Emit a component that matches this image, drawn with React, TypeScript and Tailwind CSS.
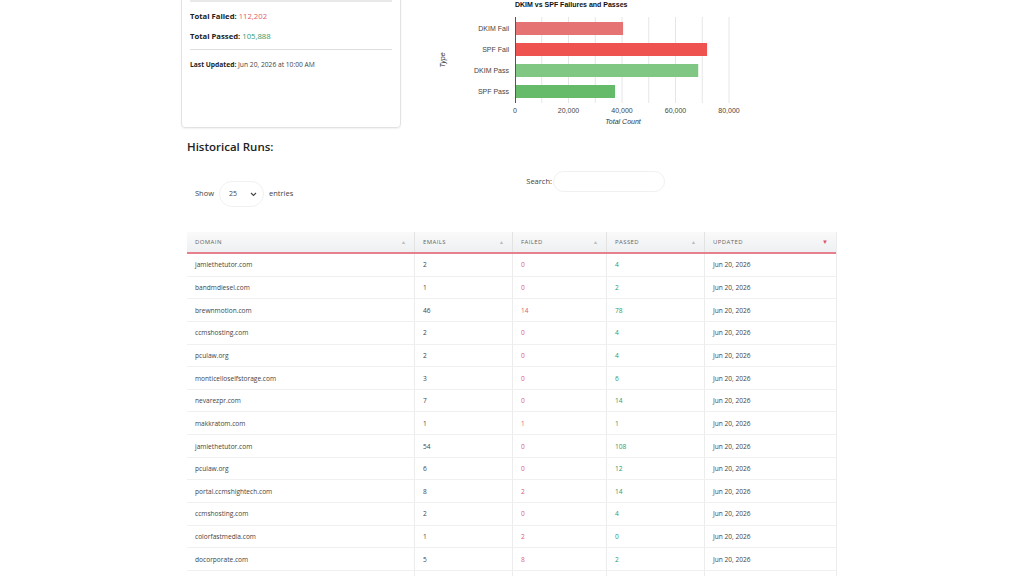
import React from "react";

type Run = { domain: string; emails: number; failed: number; passed: number; updated: string };

const runs: Run[] = [
  { domain: "jamiethetutor.com", emails: 2, failed: 0, passed: 4, updated: "Jun 20, 2026" },
  { domain: "bandmdiesel.com", emails: 1, failed: 0, passed: 2, updated: "Jun 20, 2026" },
  { domain: "brewnmotion.com", emails: 46, failed: 14, passed: 78, updated: "Jun 20, 2026" },
  { domain: "ccmshosting.com", emails: 2, failed: 0, passed: 4, updated: "Jun 20, 2026" },
  { domain: "pculaw.org", emails: 2, failed: 0, passed: 4, updated: "Jun 20, 2026" },
  { domain: "monticelloselfstorage.com", emails: 3, failed: 0, passed: 6, updated: "Jun 20, 2026" },
  { domain: "nevarezpr.com", emails: 7, failed: 0, passed: 14, updated: "Jun 20, 2026" },
  { domain: "makkratom.com", emails: 1, failed: 1, passed: 1, updated: "Jun 20, 2026" },
  { domain: "jamiethetutor.com", emails: 54, failed: 0, passed: 108, updated: "Jun 20, 2026" },
  { domain: "pculaw.org", emails: 6, failed: 0, passed: 12, updated: "Jun 20, 2026" },
  { domain: "portal.ccmshightech.com", emails: 8, failed: 2, passed: 14, updated: "Jun 20, 2026" },
  { domain: "ccmshosting.com", emails: 2, failed: 0, passed: 4, updated: "Jun 20, 2026" },
  { domain: "colorfastmedia.com", emails: 1, failed: 2, passed: 0, updated: "Jun 20, 2026" },
  { domain: "docorporate.com", emails: 5, failed: 8, passed: 2, updated: "Jun 20, 2026" },
];

const bars = [
  { label: "DKIM Fail", value: 40400, color: "#e57373" },
  { label: "SPF Fail", value: 71802, color: "#ef5350" },
  { label: "DKIM Pass", value: 68488, color: "#81c784" },
  { label: "SPF Pass", value: 37400, color: "#66bb6a" },
];

function Chart() {
  const x0 = 105;
  const scale = 214 / 80000;
  const grid = [10000, 20000, 30000, 40000, 50000, 60000, 70000, 80000];
  const ticks = [0, 20000, 40000, 60000, 80000];
  return (
    <svg width={350} height={130} className="block" style={{ fontFamily: "'Liberation Sans', Arial, sans-serif" }}>
      <text x={x0} y={7} fontSize={7} fontWeight="bold" fill="#111">
        DKIM vs SPF Failures and Passes
      </text>
      {grid.map((g) => (
        <line key={g} x1={x0 + g * scale} x2={x0 + g * scale} y1={17} y2={103} stroke="#e6e6e6" strokeWidth={1} />
      ))}
      {bars.map((b, i) => {
        const cy = 28.5 + i * 21;
        return (
          <g key={b.label}>
            <rect x={x0} y={cy - 6.5} width={b.value * scale} height={13} fill={b.color} />
            <text x={99} y={cy + 2.5} fontSize={7} textAnchor="end" fill="#444">
              {b.label}
            </text>
          </g>
        );
      })}
      <line x1={x0 + 0.5} x2={x0 + 0.5} y1={17} y2={103} stroke="#555" strokeWidth={1} />
      {ticks.map((t) => (
        <text key={t} x={x0 + t * scale} y={112.5} fontSize={7} textAnchor="middle" fill="#444">
          {t.toLocaleString("en-US")}
        </text>
      ))}
      <text x={213} y={123.5} fontSize={7} fontStyle="italic" textAnchor="middle" fill="#333">
        Total Count
      </text>
      <text x={0} y={0} fontSize={7} fontStyle="italic" textAnchor="middle" fill="#333" transform="translate(34.5 60) rotate(-90)">
        Type
      </text>
    </svg>
  );
}

function SortMark({ active }: { active?: boolean }) {
  return active ? (
    <span className="text-[6px] leading-none text-[#e0506a]">▼</span>
  ) : (
    <span className="text-[5px] leading-none text-[#bbb]">▲</span>
  );
}

const cols = [
  { key: "DOMAIN", w: "w-[227px]" },
  { key: "EMAILS", w: "w-[98px]" },
  { key: "FAILED", w: "w-[94px]" },
  { key: "PASSED", w: "w-[98px]" },
  { key: "UPDATED", w: "flex-1" },
];

export default function App() {
  return (
    <div
      className="min-h-[576px] bg-white text-[#333]"
      style={{ fontFamily: "'Open Sans', 'Noto Sans', sans-serif" }}
    >
      <div className="mx-auto w-[662px]">
        {/* summary card + chart */}
        <div className="flex items-start">
          <div className="-mt-[12px] w-[220px] h-[140px] rounded-[4px] border border-[#e2e2e2] shadow-[0_1px_2px_rgba(0,0,0,0.06)] px-[8px] pt-[11px]">
            <div className="h-[2px] bg-[#e9e9e9]" />
            <div className="mt-[8px] text-[7.7px] leading-[12px]">
              <span className="font-bold text-[#222]">Total Failed: </span>
              <span className="text-[#df5a6c]">112,202</span>
            </div>
            <div className="mt-[8px] text-[7.7px] leading-[12px]">
              <span className="font-bold text-[#222]">Total Passed: </span>
              <span className="text-[#2e9a6d]">105,888</span>
            </div>
            <div className="mt-[7px] h-px bg-[#dddddd]" />
            <div className="mt-[10px] text-[6.7px] leading-[10px]">
              <span className="font-bold text-[#222]">Last Updated: </span>
              <span className="text-[#444]">Jun 20, 2026 at 10:00 AM</span>
            </div>
          </div>
          <div className="ml-[9px]">
            <Chart />
          </div>
        </div>

        <div className="px-[6px]">
          <h2 className="mt-[9px] text-[11.5px] leading-[16px] font-semibold text-[#222]">Historical Runs:</h2>

          <div className="mt-[12px] flex items-start">
            <div className="mt-[14px] ml-[8px] flex items-center gap-[5px] text-[7.5px] text-[#444]">
              <span>Show</span>
              <div className="flex h-[26px] w-[45px] items-center justify-between rounded-full border border-[#f1f1f1] pl-[9px] pr-[6px]">
                <span className="text-[7px]">25</span>
                <svg width="7" height="5" viewBox="0 0 7 5">
                  <path d="M1 1 L3.5 3.5 L6 1" fill="none" stroke="#444" strokeWidth="1.1" />
                </svg>
              </div>
              <span>entries</span>
            </div>
            <div className="ml-[233px] mt-[4px] flex items-center text-[7.5px] text-[#444]">
              <span>Search:</span>
              <div className="ml-px h-[21px] w-[112px] rounded-full border border-[#f0f0f0]" />
            </div>
          </div>

          {/* runs table */}
          <div className="mt-[25px] border-r border-[#ececec] text-[6.6px]">
            <div className="flex h-[22px] border-b-2 border-[#e6808f] bg-gradient-to-b from-[#fafafa] to-[#eef0f1]">
              {cols.map((c, i) => (
                <div
                  key={c.key}
                  className={`${c.w} flex items-center justify-between px-[8px] ${i > 0 ? "border-l border-[#e3e3e3]" : ""}`}
                >
                  <span className="text-[6px] tracking-[0.4px] text-[#666]">{c.key}</span>
                  <SortMark active={i === 4} />
                </div>
              ))}
            </div>
            {runs.map((r, idx) => (
              <div key={idx} className="flex h-[22.65px] border-b border-[#f0f0f0]">
                <div className="w-[227px] flex items-center px-[8px] pt-px text-[#444]">{r.domain}</div>
                <div className="w-[98px] flex items-center px-[8px] pt-px border-l border-[#ececec] text-[#444]">{r.emails}</div>
                <div className="w-[94px] flex items-center px-[8px] pt-px border-l border-[#ececec] text-[#df5a6c]">{r.failed}</div>
                <div className="w-[98px] flex items-center px-[8px] pt-px border-l border-[#ececec] text-[#2e9a6d]">{r.passed}</div>
                <div className="flex-1 flex items-center px-[8px] pt-px border-l border-[#ececec] text-[#444]">{r.updated}</div>
              </div>
            ))}
            <div className="flex h-[22.6px]">
              <div className="w-[227px]" />
              <div className="w-[98px] border-l border-[#ececec]" />
              <div className="w-[94px] border-l border-[#ececec]" />
              <div className="w-[98px] border-l border-[#ececec]" />
              <div className="flex-1 border-l border-[#ececec]" />
            </div>
          </div>
        </div>
      </div>
    </div>
  );
}
